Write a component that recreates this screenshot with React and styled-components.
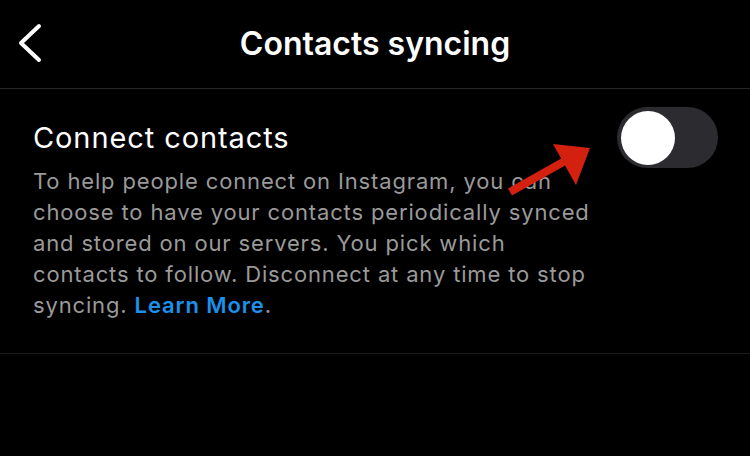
import React from "react";
import styled, { createGlobalStyle } from "styled-components";

const Global = createGlobalStyle`
  html, body { margin: 0; padding: 0; background: #000; }
  body { font-family: Inter, "Noto Sans", sans-serif; -webkit-font-smoothing: antialiased; }
`;

const Page = styled.div`
  position: relative;
  width: 750px;
  height: 456px;
  background: #000;
  overflow: hidden;
`;

const Header = styled.header`
  height: 88px;
  display: grid;
  grid-template-columns: 80px 1fr 80px;
  align-items: center;
  border-bottom: 1px solid #262626;
`;

const BackButton = styled.button`
  background: none;
  border: 0;
  padding: 0 0 0 16px;
  display: flex;
  align-items: center;
  cursor: pointer;
  margin-top: -2px;
`;

const Title = styled.h1`
  margin: 0;
  text-align: center;
  color: #fff;
  font-size: 32px;
  font-weight: 600;
  letter-spacing: 0px;
  margin-top: -2px;
`;

const Section = styled.section`
  padding: 18px 32px 0 33px;
  height: 246px;
  border-bottom: 1px solid #1c1c1c;
`;

const TopRow = styled.div`
  display: flex;
  justify-content: space-between;
  align-items: center;
`;

const RowTitle = styled.div`
  color: #fff;
  font-size: 29px;
  font-weight: 400;
  letter-spacing: 0.9px;
  line-height: 38px;
`;

const Body = styled.p`
  margin: -2px 0 0;
  max-width: 565px;
  color: #9a9a9a;
  font-size: 22px;
  line-height: 31px;
  letter-spacing: 0.85px;
`;

const Link = styled.a`
  color: #1d90ea;
  font-weight: 600;
  letter-spacing: 0.9px;
  text-decoration: none;
`;

const Track = styled.div`
  flex: none;
  width: 101px;
  height: 61px;
  border-radius: 31px;
  background: #2c2b30;
  display: flex;
  align-items: center;
  padding: 0 4px;
  box-sizing: border-box;
`;

const Knob = styled.div`
  width: 54px;
  height: 54px;
  border-radius: 50%;
  background: #fff;
`;

const Arrow = styled.svg`
  position: absolute;
  left: 500px;
  top: 135px;
`;

export default function App() {
  return (
    <Page>
      <Global />
      <Header>
        <BackButton aria-label="Back">
          <svg width="30" height="40" viewBox="0 0 30 40">
            <path d="M23 3 L5 20 L23 37" fill="none" stroke="#fff" strokeWidth="4" strokeLinecap="round" strokeLinejoin="round" />
          </svg>
        </BackButton>
        <Title>Contacts syncing</Title>
        <div />
      </Header>
      <Section>
        <TopRow>
          <RowTitle>Connect contacts</RowTitle>
          <Track>
            <Knob />
          </Track>
        </TopRow>
        <Body>
          To help people connect on Instagram, you can choose to have your contacts periodically synced and stored on our servers. You pick which contacts to follow. Disconnect at any time to stop syncing. <Link href="#">Learn More</Link>.
        </Body>
      </Section>
      <Arrow width="100" height="65" viewBox="0 0 100 65">
        <path d="M10 57 L72 22" stroke="#d4200f" strokeWidth="8" strokeLinecap="butt" />
        <polygon points="90,13 53,9 76,50" fill="#d4200f" />
      </Arrow>
    </Page>
  );
}
